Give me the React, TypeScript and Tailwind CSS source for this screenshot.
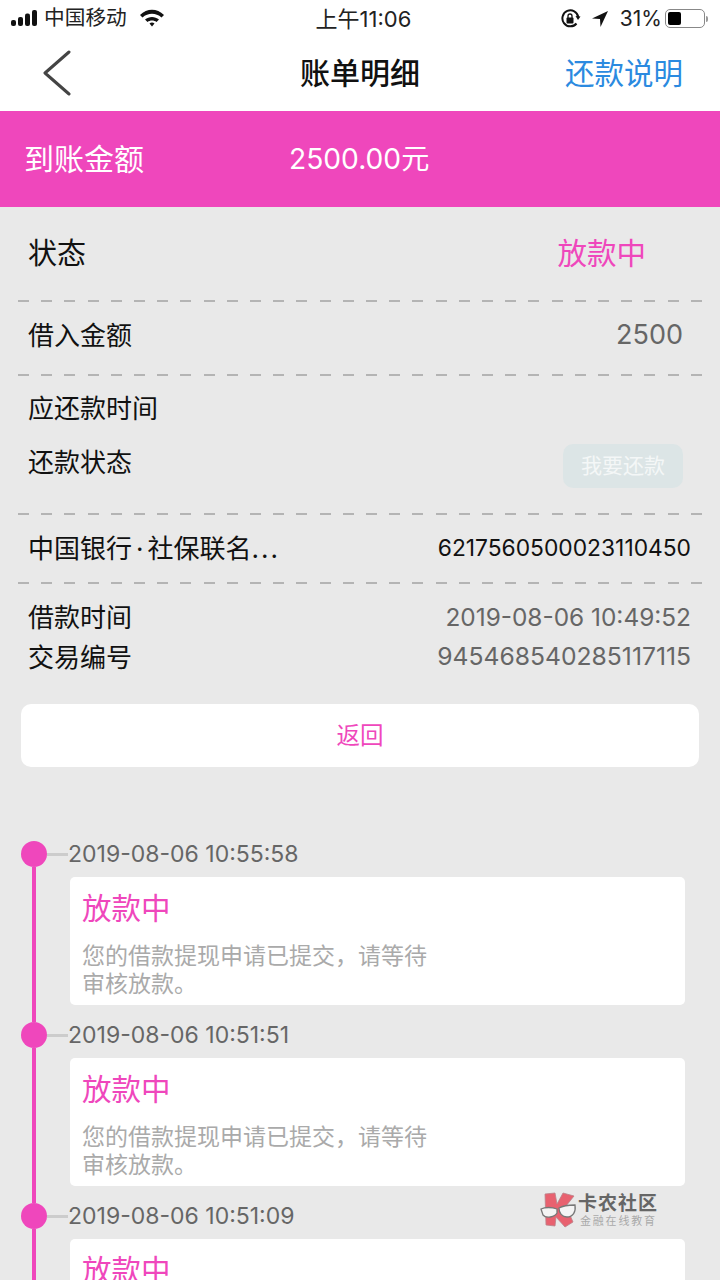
const DASH = "h-[2px] mx-[18px] bg-[repeating-linear-gradient(90deg,#b4b4b4_0,#b4b4b4_11px,transparent_11px,transparent_23.2px)]";

const logs = ["2019-08-06 10:55:58", "2019-08-06 10:51:51", "2019-08-06 10:51:09"];

function StatusBar() {
  return (
    <div className="h-[37px] flex items-center justify-between bg-white pl-[11px] pr-[12px] text-[#111]">
      <div className="flex items-center w-[240px]">
        <svg width="28" height="18" viewBox="0 0 28 18" fill="#111">
          <rect x="0" y="11" width="5" height="6" rx="2" />
          <rect x="7" y="8" width="5" height="9" rx="2" />
          <rect x="14" y="4.500" width="5" height="12.500" rx="2" />
          <rect x="21" y="1" width="5" height="16" rx="2" />
        </svg>
        <span className="ml-[5px] text-[20.700px] leading-none text-[#222]">中国移动</span>
        <svg className="ml-[12px]" width="26" height="20" viewBox="0 0 26 20" fill="#111">
          <path d="M1 7 C8 0 18 0 25 7 L22.500 9.500 C17 4.500 9 4.500 3.500 9.500 Z" />
          <path d="M6 11.500 C10 8 16 8 20 11.500 L17.500 14 C15 12 11 12 8.500 14 Z" />
          <path d="M10.500 15.500 C12 14.300 14 14.300 15.500 15.500 L13 18.500 Z" />
        </svg>
      </div>
      <span className="text-[22px] leading-none text-[#222] ml-[8px]">上午11:06</span>
      <div className="flex items-center justify-end w-[240px]">
        <svg width="21" height="20" viewBox="0 0 21 20" fill="none" stroke="#111">
          <path d="M16.500 14.500 A8 8 0 1 1 18.300 8" strokeWidth="2" />
          <path d="M15.500 7 L20.500 7.500 L18 11 Z" fill="#111" stroke="none" />
          <rect x="6.500" y="8.500" width="7" height="6" rx="1" fill="#111" stroke="none" />
          <path d="M8 9 V7 A2 2 0 0 1 12 7 V9" strokeWidth="1.300" />
        </svg>
        <svg className="ml-[11px]" width="16" height="16" viewBox="0 0 16 16" fill="#111">
          <path d="M16 0 L0 7.500 L8 8 L8.500 16 Z" />
        </svg>
        <span className="ml-[12px] text-[21px] leading-none text-[#222]">31%</span>
        <div className="ml-[3px] w-[40px] h-[19px] rounded-[5px] border border-[#888] p-[2px] flex">
          <div className="w-[13px] rounded-[2px] bg-black" />
        </div>
        <div className="ml-[1px] w-[2px] h-[6px] rounded-r bg-[#999]" />
      </div>
    </div>
  );
}

function Logo() {
  return (
    <div className="absolute left-[540px] top-[1192px] flex items-center">
      <svg width="38" height="37" viewBox="0 0 38 37">
        <path d="M5 2 L15 1 L17 12 L23 1 L34 4 L26 14 L33 30 L25 35 L16 25 L15 34 L6 33 Z" fill="#e8616f" stroke="#b9838a" strokeWidth="0.800" />
        <path d="M1 17 C5 15 12 15 17 17 L17 21 C15 25 6 27 3 23 Z" fill="#f4f4f4" stroke="#777" strokeWidth="1.300" />
        <path d="M19 16 C24 13 30 13 35 13 C36 20 33 25 27 25 C22 25 19 21 19 16 Z" fill="#f4f4f4" stroke="#777" strokeWidth="1.300" />
      </svg>
      <div className="flex flex-col">
        <span className="mt-[1px] text-[19px] leading-[20px] font-bold text-[#666] tracking-[1px]">卡农社区</span>
        <span className="text-[11px] leading-[14px] text-[#aaa] tracking-[1.800px] ml-[2px]">金融在线教育</span>
      </div>
    </div>
  );
}

function LogItem({ time }: { time: string }) {
  return (
    <div className="flex">
      <div className="w-[26px] flex flex-col items-center">
        <div className="w-[26px] h-[26px] rounded-full bg-[#ef47bc] shrink-0" />
        <div className="w-[4px] flex-1 bg-[#ef47bc]" />
      </div>
      <div className="flex-1 pb-[17px]">
        <div className="h-[26px] flex items-center">
          <div className="w-[21px] h-[3px] bg-[#ccc]" />
          <span className="pt-[1px] text-[23px] text-[#666] whitespace-nowrap">{time}</span>
        </div>
        <div className="mt-[10px] ml-[23px] mr-[35px] h-[128px] bg-white rounded-[5px] px-[12px] pt-[11px]">
          <div className="text-[29.500px] leading-[40px] text-[#ef47bc]">放款中</div>
          <div className="mt-[14px] w-[350px] text-[23px] leading-[28px] text-[#aaa]">您的借款提现申请已提交，请等待审核放款。</div>
        </div>
      </div>
    </div>
  );
}

export default function App() {
  return (
    <div className="relative w-[720px] h-[1280px] overflow-hidden bg-[#e9e9e9] font-['Inter','Noto_Sans_CJK_SC',sans-serif] text-[#111]">
      <StatusBar />

      <div className="h-[74px] bg-white flex items-center justify-between relative pb-[2px]">
        <svg className="ml-[43px]" width="28" height="46" viewBox="0 0 28 46" fill="none" stroke="#444" strokeWidth="3" strokeLinecap="round" strokeLinejoin="round">
          <path d="M26 2 L2 23 L26 44" />
        </svg>
        <span className="absolute left-0 right-0 text-center text-[30px] font-medium text-[#111] pointer-events-none">账单明细</span>
        <span className="mr-[37px] text-[29.500px] text-[#2b8ae0]">还款说明</span>
      </div>

      <div className="h-[96px] bg-[#ef47bc] flex items-center pl-[24px] text-white text-[30px]">
        <span className="w-[265px]">到账金额</span>
        <span className="text-[28.200px]">2500.00元</span>
      </div>

      <div className="h-[93px] flex items-center justify-between pl-[28px] pr-[74px] pb-[1px]">
        <span className="mt-[2px] text-[29px]">状态</span>
        <span className="text-[29.500px] text-[#ef47bc]">放款中</span>
      </div>
      <div className={DASH} />

      <div className="h-[72px] flex items-center justify-between pl-[28px] pr-[37px] pb-[5px]">
        <span className="text-[26px] mb-[1px]">借入金额</span>
        <span className="text-[27px] text-[#666]">2500</span>
      </div>
      <div className={DASH} />

      <div className="h-[137px] pl-[28px] pr-[37px] pt-[14px]">
        <div className="text-[26px] leading-[38px]">应还款时间</div>
        <div className="flex items-center justify-between mt-[16px]">
          <span className="text-[26px] leading-[38px] mb-[6px]">还款状态</span>
          <span className="w-[120px] h-[44px] rounded-[10px] bg-[#dce5e6] flex items-center justify-center text-[21px] text-[#f4f7f7]">我要还款</span>
        </div>
      </div>
      <div className={DASH} />

      <div className="h-[67px] flex items-center justify-between pl-[28px] pr-[29px]">
        <span className="text-[26px] whitespace-nowrap">
          中国银行<span className="mx-[4px]">·</span>社保联名<span className="tracking-[2px]">...</span>
        </span>
        <span className="text-[22.800px]">6217560500023110450</span>
      </div>
      <div className={DASH} />

      <div className="pl-[28px] pr-[29px] pt-[13px]">
        <div className="flex items-center justify-between h-[40px]">
          <span className="text-[26px]">借款时间</span>
          <span className="text-[24.400px] text-[#666]">2019-08-06 10:49:52</span>
        </div>
        <div className="flex items-center justify-between h-[40px]">
          <span className="text-[26px]">交易编号</span>
          <span className="text-[24.700px] text-[#666]">945468540285117115</span>
        </div>
      </div>

      <div className="mx-[21px] mt-[27px] h-[63px] bg-white rounded-[10px] flex items-center justify-center pt-[1px] text-[23.500px] text-[#ef47bc]">返回</div>

      <div className="mt-[74px] pl-[21px]">
        {logs.map((t) => (
          <LogItem key={t} time={t} />
        ))}
      </div>

      <Logo />
    </div>
  );
}
